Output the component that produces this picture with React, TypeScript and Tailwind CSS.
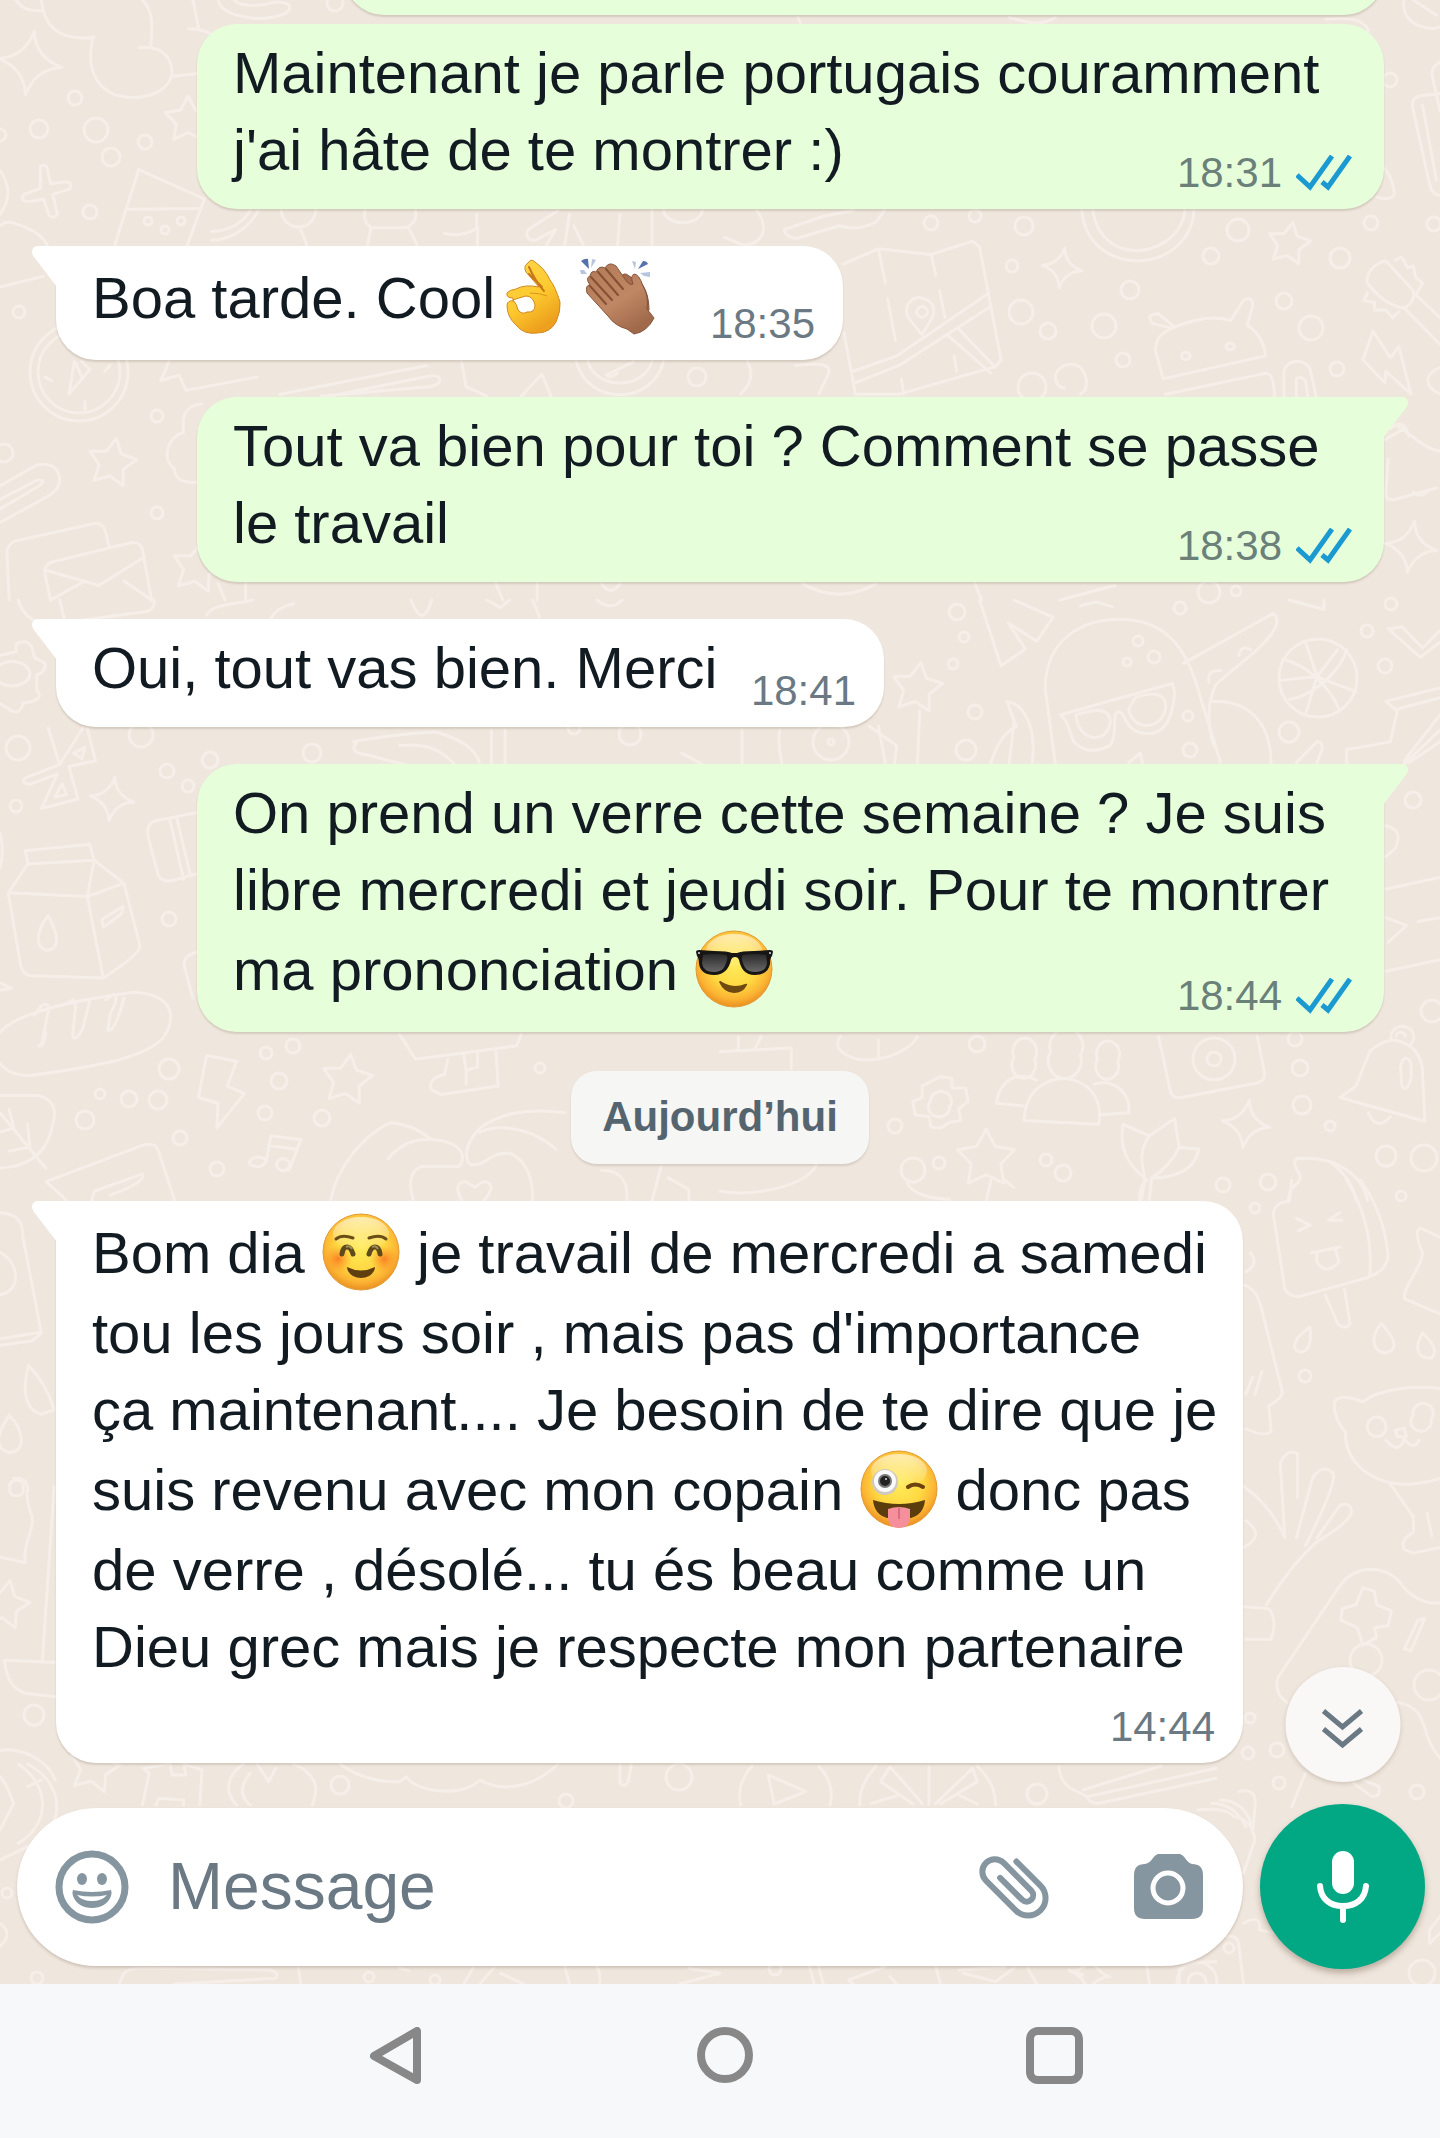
import { ReactNode } from 'react';
import clsx from 'clsx';

type Message = {
  id: string;
  mine: boolean;
  tail: boolean;
  time: string;
  lines: ReactNode[];
  layout: 'inline' | 'overlay' | 'stacked';
  width: string;
};

const RINGS: [number, number, number][] = [
  [75, 98, 7], [39, 129, 9], [96, 130, 12], [145, 142, 7], [111, 157, 9],
  [90, 212, 7], [0, 135, 6], [148, 221, 4], [181, 221, 4], [165, 230, 4],
  [19, 312, 6], [157, 416, 6], [4, 453, 9], [157, 513, 6], [697, 377, 9],
  [335, 3, 8], [931, 223, 7], [975, 216, 6], [1024, 226, 9], [1238, 230, 11],
  [1211, 256, 8], [1012, 266, 6], [1130, 290, 9], [1021, 312, 12],
  [1048, 331, 8], [1104, 326, 12], [1123, 360, 7], [1340, 258, 10],
  [1371, 223, 7], [1284, 301, 8], [1311, 328, 12], [1337, 369, 7],
  [1390, 80, 7], [1434, 224, 7], [1209, 592, 11], [1236, 591, 5],
  [1032, 387, 14], [18, 748, 12], [141, 735, 12], [167, 771, 7],
  [188, 786, 6], [210, 760, 8], [16, 806, 6], [312, 753, 9], [169, 919, 7],
  [266, 1053, 6], [293, 1046, 7], [169, 1069, 10], [279, 1081, 8],
  [100, 1094, 5], [129, 1099, 8], [158, 1100, 9], [85, 1120, 9],
  [265, 1113, 7], [322, 1118, 8], [180, 1138, 7], [217, 1169, 7],
  [540, 1068, 5], [630, 734, 11], [574, 728, 6], [957, 612, 8],
  [964, 637, 5], [953, 664, 5], [975, 712, 7], [966, 750, 10],
  [1180, 608, 6], [1138, 641, 5], [1154, 657, 6], [1127, 662, 4],
  [1367, 631, 6], [1385, 666, 7], [1289, 732, 10], [1391, 604, 6],
  [1188, 716, 5], [1190, 750, 7], [977, 1044, 8], [1295, 1039, 7],
  [1300, 1068, 8], [1302, 1105, 9], [1330, 1126, 5], [895, 1126, 7],
  [913, 1170, 12], [939, 1163, 6], [1046, 1160, 6], [1063, 1173, 8],
  [1223, 1185, 7], [1268, 1182, 8], [1386, 1156, 10], [1424, 1158, 13],
  [1413, 800, 8], [1432, 1011, 11], [34, 1715, 10], [1255, 1208, 5],
  [1401, 1196, 5], [1305, 1376, 6], [1366, 1660, 16], [1429, 1685, 15],
  [1250, 1718, 5], [1248, 1753, 6], [1277, 1750, 7], [1037, 1794, 10],
  [1279, 1783, 6], [1417, 1792, 7], [775, 1969, 6], [1229, 1948, 5],
  [1422, 1973, 13], [1197, 1982, 20], [1197, 1982, 9], [340, 1785, 9],
  [566, 1801, 7], [679, 1777, 13], [369, 1977, 5], [435, 1980, 5],
  [37, 1978, 6], [7, 1893, 5],
  // compass and camera lens
  [79, 372, 49], [79, 372, 41], [1214, 1059, 21], [1214, 1059, 7],
  [831, 742, 18], [831, 742, 3], [1318, 678, 39],
];

const STARS: [number, number, number, number][] = [
  [112, 463, 25, 10], [188, 120, 24, 0], [197, 568, 26, 10],
  [1289, 244, 22, 10], [917, 688, 26, 8], [986, 1159, 30, 0],
  [347, 1080, 26, 8], [5, 1605, 25, 12], [94, 1768, 26, 12],
];

const SPARKLES: [number, number, number][] = [
  [30, 63, 32], [1062, 268, 20], [1411, 547, 26], [112, 799, 22],
  [1246, 1124, 24], [1090, 1974, 20],
];

function starPoints(r: number) {
  return Array.from({ length: 10 }, (_, i) => {
    const radius = i % 2 ? r * 0.52 : r;
    const angle = (i * Math.PI) / 5 - Math.PI / 2;
    return `${radius * Math.cos(angle)},${radius * Math.sin(angle)}`;
  }).join(' ');
}

function Doodles({ x, y, sy, paths }: { x: number; y: number; sy: number; paths: string[] }) {
  return (
    <g transform={`translate(${x} ${y}) scale(0.4592 ${sy})`}>
      {paths.map((d) => (
        <path key={d} d={d} vectorEffect="non-scaling-stroke" />
      ))}
    </g>
  );
}

const DOODLE_GROUPS = [
  {
    x: 0,
    y: 0,
    sy: 0.3827,
    paths: [
      // cloud, dropped shapes along the top edge
      'M90 0C95 60 120 108 205 98M35 0C45 20 65 30 90 28M310 0C335 30 332 70 328 125M203 95C185 180 210 250 285 255C350 255 378 215 374 180C370 140 345 120 303 125M374 200L430 192M410 75Q440 75 458 88M420 0L432 70M475 0C480 40 560 60 610 40C640 30 640 5 600 5C560 20 520 15 510 0',
      // plus
      'M88 435Q98 425 103 440L110 480L145 475Q160 480 150 495L115 508L125 560Q115 575 106 560L95 520L62 527Q42 525 52 508L88 492Z',
      // pizza slice
      'M302 443L250 640M302 443L445 520L408 640M275 547L440 545M0 445C20 480 25 520 0 560M0 590Q15 575 35 585C75 600 100 620 110 660',
      'M0 750L95 722M562 550C545 590 510 625 460 628M545 550C530 580 500 605 460 605',
      // mushroom row
      'M612 550C615 600 680 615 688 550M655 600L668 640M795 550Q790 580 808 595H885Q910 580 905 550M808 595L800 640M890 595L908 640M1038 560V600M968 610Q1010 620 1040 595V640M1215 550L1150 600Q1140 625 1165 628L1210 600L1190 640M1240 560L1230 640M1250 590L1270 640M1420 550V640M1350 560L1345 640M1445 550C1450 590 1520 595 1530 550',
      // compass needle
      'M162 945L150 1030L196 965L178 945M165 950L180 990M98 985L112 995M240 955L228 970M185 1070V1050',
      'M368 945L350 995L390 980L405 1020L560 985M610 1030L930 955M700 1035L940 1010Q965 1000 955 985Q945 978 925 985L720 1035M1005 945L1015 1010L1060 1035M1135 1035L1180 978L1200 1035M1255 945C1280 1060 1420 1060 1445 945M1280 945C1300 1020 1400 1020 1420 945M1320 980L1380 945M1325 985Q1335 985 1345 975',
      'M440 1055C400 1060 395 1090 400 1130C365 1140 350 1200 380 1225C380 1255 400 1262 430 1260',
      // paper clip
      'M0 1270L80 1215Q125 1205 130 1250Q130 1280 100 1300L0 1365M0 1330L85 1270Q105 1250 80 1255L0 1305',
      // envelopes
      'M20 1568L15 1440Q20 1415 40 1412L205 1368Q225 1365 230 1390L238 1430M110 1568L98 1500Q95 1475 115 1468L285 1418Q305 1415 310 1435L330 1568M100 1490L215 1530L315 1455M110 1568L185 1518M270 1518L330 1568',
      'M475 1525L490 1568M535 1525V1568M1080 1525L1095 1568M1170 1525V1568M1310 1525Q1330 1560 1350 1525',
    ],
  },
  {
    x: 720,
    y: 0,
    sy: 0.3827,
    paths: [
      'M1490 0C1480 60 1540 85 1568 70M1510 0L1560 40M1568 162Q1545 175 1552 205L1568 290M1568 245L1525 250Q1505 255 1508 280L1545 480Q1550 510 1568 510M1530 275L1560 470M1448 440Q1470 480 1468 510Q1460 525 1430 515',
      'M80 550C110 600 90 640 50 640L10 620M140 600L225 565L290 550M140 605Q150 625 170 622L260 590Q300 605 340 580L358 550M170 45L175 62M630 45Q700 75 730 45M1320 50Q1400 40 1412 80',
      // portrait ring
      'M788 550C795 640 850 680 910 682C980 680 1030 620 1032 550M812 550C820 620 860 655 910 655C970 650 1010 600 1012 550',
      // folded map
      'M268 690L345 650L460 665L550 630L565 645L612 940L600 958L390 1030L295 1030L270 870M345 650L360 740M365 780L382 890M460 665L470 720M478 760L490 830M395 990L400 1030M290 970L385 930L580 770M295 1000L390 955L590 800M495 875L590 975M520 860L600 960M510 930L515 970',
      'M440 875L410 830C395 790 430 770 440 780C465 785 470 810 462 830ZM432 805A8 9 0 1 0 448 825A8 9 0 1 0 432 805',
      // robot head
      'M965 990L948 915C950 870 975 865 985 858L942 845Q925 820 955 820L990 855C1020 840 1070 820 1112 838L1140 785Q1160 770 1160 800L1148 850C1175 870 1185 900 1188 930ZM1005 930A9 9 0 1 0 1024 930A9 9 0 1 0 1005 930M1102 905A9 9 0 1 0 1120 905A9 9 0 1 0 1102 905M970 1030L1190 975Q1205 975 1208 1035M1228 1035V970Q1235 940 1265 945Q1285 950 1288 980L1298 1035M1255 1035V990Q1265 980 1275 995L1280 1035',
      'M730 980C740 950 770 945 785 960C805 990 800 1020 785 1030M750 1015Q730 1010 730 980',
      // guitar head
      'M1410 740C1405 710 1430 685 1450 682L1510 760Q1515 790 1490 805Q1450 800 1410 740M1470 680L1485 672L1498 700L1510 695L1515 725L1530 740L1518 765M1410 765L1402 785L1425 790L1425 810L1450 810L1465 830L1478 815M1490 805L1568 900M1515 770L1568 830',
      'M1422 865L1400 940L1448 1000L1450 970L1505 1030L1478 905L1460 935Z',
      'M1568 960C1530 980 1535 1010 1568 1030M1470 1110C1500 1130 1530 1170 1568 1180M1455 1200L1450 1290Q1450 1310 1470 1305L1560 1275M1510 1285Q1525 1305 1545 1280M1445 1150L1490 1120M1500 1140Q1490 1090 1460 1120',
      'M180 1525Q260 1580 340 1525M555 1525L570 1568M860 1530L740 1568M60 945Q80 990 45 1030M165 955Q250 940 235 980L215 1030',
    ],
  },
  {
    x: 0,
    y: 600,
    sy: 0.3827,
    paths: [
      'M40 0Q50 50 100 65L320 30Q340 20 335 0M130 0L140 50M450 40C460 10 520 10 550 0M590 50Q600 20 640 10M895 0Q920 80 940 0M1060 0L1090 20L1110 0M1160 0L1175 45M1300 0Q1330 30 1355 0',
      // cog
      'M0 145L35 135V115Q60 100 70 125L75 150L98 165Q100 190 80 195V235Q95 255 70 265L50 270Q45 300 25 290L0 270M0 170A38 32 0 1 1 0 215',
      // tied bow
      'M105 335L130 430L55 465Q45 480 65 482L125 455L90 545L170 520L150 435L208 420L190 335M130 430L180 335M160 400L185 385L178 415ZM120 515L135 480L145 508Z',
      'M770 370Q860 350 950 345C1020 370 1040 400 1045 430M775 375Q760 400 800 405L880 430M870 380Q950 370 990 430M1070 340V430M1100 340V430M1485 400L1530 430',
      // milk carton
      'M60 685L55 655L195 638L205 680L60 690L18 765L190 775L205 680L270 740L305 905Q305 925 225 988L190 775L270 740M18 765L45 955Q50 985 80 982L225 988M222 835L268 800L265 820L225 855ZM105 825C80 860 75 905 100 915C130 915 130 880 105 825',
      'M430 555L335 578Q315 590 325 630L345 720Q355 740 380 732L430 715M370 575L400 730M385 570L415 720M430 920Q395 930 402 960L420 1040M0 610Q10 650 0 700M0 1000L25 1015L0 1020',
      // bread
      'M0 1130C40 1070 200 1040 290 1025C370 1030 390 1080 355 1145C310 1200 200 1220 70 1242Q20 1245 0 1210M75 1085L90 1060Q110 1050 105 1075L90 1165M85 1165Q95 1170 100 1130M135 1060L160 1045L165 1060L158 1140Q165 1155 180 1120L195 1050M230 1045L248 1030Q260 1040 240 1080L235 1125Q250 1130 270 1040',
      // bolt
      'M450 1190L515 1205L495 1270L532 1290L472 1380L475 1315L432 1300Z',
      // leaf
      'M0 1295H85Q130 1310 115 1370C105 1440 70 1480 0 1485M0 1340L100 1485M20 1330L30 1380L0 1390M60 1370L65 1430L20 1440',
      // music note
      'M580 1465L590 1400L655 1410L630 1490M585 1425L645 1435M580 1465A18 14 0 1 0 545 1475Q570 1490 580 1465M630 1480A14 16 0 1 0 605 1485Q620 1500 630 1480',
      'M100 1520L310 1425Q340 1415 345 1440L380 1568M100 1520L145 1568M200 1568L205 1545L310 1500Q320 1520 240 1555',
      // clasped hands
      'M720 1568C735 1480 790 1400 850 1365Q900 1370 940 1410M845 1460Q880 1410 930 1410C1000 1410 1020 1450 1000 1480H920C890 1490 890 1530 900 1568M1020 1470Q1005 1430 1045 1380Q1110 1320 1230 1340M1045 1390C1110 1360 1180 1400 1210 1435M1025 1475C1060 1480 1060 1445 1110 1445Q1160 1470 1160 1568M1005 1568Q985 1520 1015 1520L1035 1535Q1060 1505 1070 1535Q1065 1555 1055 1568',
      'M870 1135L905 1200L1125 1165L1135 1135M975 1200L968 1240Q930 1250 940 1280L960 1292L1085 1270L1080 1180M1010 1190L1015 1230L1040 1220V1185M1015 1235V1265M1310 1490Q1370 1490 1365 1568M1440 1480L1420 1568M1455 1510L1500 1540V1568',
    ],
  },
  {
    x: 720,
    y: 600,
    sy: 0.3827,
    paths: [
      'M565 0L612 172L665 128L628 60L690 108L725 45L640 0M785 15L820 5L855 18M1240 0L1315 25V0',
      // face with glasses
      'M730 425L708 230C710 100 790 50 870 50C980 50 1020 140 1045 250L1090 425M742 300L985 218L990 240C985 340 950 360 910 345C880 330 885 300 870 292C850 290 868 350 850 380Q800 410 770 370L755 320ZM775 300C780 370 840 380 850 320C850 280 820 285 775 300M890 285C900 345 960 340 970 285C975 240 940 240 905 255Z',
      'M1010 165L1205 35C1230 60 1190 110 1150 150L1080 220C1060 270 1060 320 1075 380M1070 265C1150 260 1200 320 1200 425M1065 215Q1060 180 1090 185M1130 145Q1135 115 1155 130',
      // ball seams
      'M1225 155C1280 170 1330 230 1350 290M1240 260C1290 250 1350 190 1365 130M1275 110L1300 200L1275 300M1345 130L1300 200L1385 240M1220 210L1300 200',
      'M1455 75L1525 150L1568 110M1460 75L1485 70L1530 125L1568 80M1568 230L1450 265L1475 290L1460 370Q1400 385 1365 390V425M1475 285L1568 255M1500 425L1568 370M1490 420L1568 300M1255 425L1300 370Q1315 370 1310 395L1300 425M1480 440L1568 340',
      'M625 265C660 270 690 330 680 425M625 265L645 330Q610 350 590 425M640 320L630 425M48 340V425M130 340Q125 380 135 425M345 330L360 425M325 330L385 380L380 425M435 290L430 425M890 425L915 400L920 425',
      'M1450 590Q1490 600 1470 650L1450 670M1450 755L1568 725M1520 840L1568 830M1450 830L1495 850L1455 895M1450 970L1568 940',
      // group of people
      'M640 1195A26 35 0 1 1 685 1200A26 35 0 1 1 640 1195M720 1180A36 46 0 1 1 785 1190A36 46 0 1 1 720 1180M822 1200A25 34 0 1 1 866 1205A25 34 0 1 1 822 1200M662 1360C665 1280 710 1250 750 1250C800 1255 835 1300 825 1370ZM690 1255C650 1230 610 1250 602 1315L660 1322M815 1265C860 1250 895 1290 890 1340L830 1345',
      'M955 1140L980 1280Q985 1305 1005 1300L1170 1262Q1190 1255 1185 1230L1170 1140',
      // bell
      'M1350 1300L1385 1270L1415 1180Q1440 1150 1470 1150C1510 1160 1530 1190 1530 1240L1535 1362ZM1462 1150A25 28 0 1 1 1505 1160M1473 1140A9 10 0 1 1 1492 1140M1412 1340Q1430 1390 1460 1350M1485 1270L1482 1220Q1490 1180 1505 1210V1250Q1495 1290 1485 1270',
      // small cog
      'M465 1255L480 1245L505 1250L505 1275L535 1275L540 1310L520 1330L525 1360L500 1365L480 1380L460 1378L455 1350L425 1345L420 1310L440 1300L440 1270ZM458 1310A23 26 0 1 1 500 1325A23 26 0 1 1 458 1310',
      // tulip
      'M918 1568L925 1510C880 1470 870 1420 878 1370L935 1400L990 1355L1000 1430L1042 1435C1035 1490 990 1510 940 1510L935 1568M935 1400C910 1440 920 1480 925 1510M1000 1430Q980 1480 940 1510',
      'M1238 1568C1240 1520 1270 1530 1262 1500Q1245 1470 1255 1460C1350 1450 1400 1510 1410 1568M1330 1470Q1375 1510 1385 1568M0 1180L80 1175L155 1170V1225M75 1175L90 1140M40 1140V1170M262 1140Q240 1180 300 1200C360 1210 420 1170 430 1140M345 1200V1150M0 1545C80 1560 190 1530 210 1475',
    ],
  },
  {
    x: 0,
    y: 1180,
    sy: 0.3827,
    paths: [
      'M0 85C40 90 50 110 50 150L90 400L70 420L0 432M0 300C50 290 40 210 0 190M0 415L88 398M62 485C50 540 50 600 90 612L118 600Q100 530 62 485M20 615C0 650 -20 700 20 712C60 710 50 650 20 615',
      'M30 780Q60 775 60 810Q55 830 70 880C75 920 50 940 55 1000L0 985M22 805A15 15 0 1 1 50 805A15 15 0 1 1 22 805M118 800L92 1260M118 1260L10 1255Q15 1330 60 1342L122 1350M0 1490C60 1480 110 1530 120 1568',
    ],
  },
  {
    x: 720,
    y: 1180,
    sy: 0.3827,
    paths: [
      // ice lolly
      'M1245 0L1240 55Q1205 60 1205 90L1230 285Q1240 305 1260 305L1410 255Q1450 240 1455 200C1450 130 1430 60 1395 0M1365 0C1410 90 1420 170 1415 250M1318 300L1345 375Q1360 395 1372 375L1360 285M1255 100L1285 118L1260 132M1350 85L1325 105L1355 105M1288 190L1350 175M1300 190V215Q1320 250 1348 215L1340 180',
      'M1285 385C1250 410 1240 445 1265 450Q1290 445 1285 385M1440 375C1415 410 1420 450 1450 452Q1490 440 1440 375M1530 400C1510 440 1520 468 1550 465Q1568 440 1530 400M1568 150L1525 125Q1510 135 1530 190C1525 240 1490 270 1490 310L1568 350',
      // puppy
      'M1568 545C1500 535 1430 550 1400 580Q1350 555 1338 580Q1335 620 1362 660C1360 720 1400 790 1490 795C1530 795 1550 785 1568 780M1410 640A20 25 0 1 1 1450 650A20 25 0 1 1 1410 640M1510 615A22 25 0 1 1 1548 625A22 25 0 1 1 1510 615M1470 655L1490 648L1495 670L1475 670ZM1450 680Q1480 720 1490 675Q1510 710 1522 680M1460 795L1510 880V920Q1480 940 1490 965L1510 975L1568 960M1540 870L1550 930',
      'M1142 275C1170 285 1175 320 1180 340L1225 555Q1220 575 1195 590L1200 655Q1190 675 1145 650M1145 560L1160 515M1165 560L1180 500M1155 190Q1175 220 1145 240',
      // celery
      'M1230 935L1220 740Q1235 700 1258 715V830M1255 935L1290 780Q1310 740 1335 765Q1345 790 1275 955M1300 935L1350 850Q1375 840 1375 870Q1365 900 1300 945Q1240 1010 1190 1110M1140 800Q1200 850 1230 935M1145 890Q1190 930 1140 960M1142 1115L1195 1120Q1215 1150 1200 1200H1145',
      // gamepad
      'M1568 1105C1540 1110 1500 1090 1480 1050C1440 1000 1380 1010 1350 1060L1215 1300Q1205 1340 1235 1365M1385 1110L1400 1065L1425 1075L1430 1110L1462 1125L1455 1165L1425 1170L1430 1195L1400 1215L1388 1170L1352 1150L1355 1120ZM1520 1150L1535 1145L1505 1230L1490 1225ZM1475 1365C1550 1380 1520 1450 1568 1510',
      'M410 0C400 20 440 50 500 50M590 0L580 55M620 0L640 20M915 55Q910 20 930 0',
    ],
  },
  {
    x: 0,
    y: 1760,
    sy: 0.3333,
    paths: [
      'M0 50C15 70 20 100 30 130L0 210M60 12C140 70 150 200 60 260L0 300M40 12C110 80 110 190 40 250M60 80L90 60',
      'M310 135L325 40L312 25L370 12L375 45H405L400 12L440 30L435 135M340 135L345 115L400 120V135M530 12C490 50 490 100 515 135M560 12L585 65L600 25M640 12C700 50 690 100 680 135M545 40C525 70 520 110 545 135',
      'M740 12Q800 70 870 65L885 50C900 90 1000 120 1045 60C1110 110 1180 60 1215 12M1350 12V70Q1360 85 1368 65L1375 12M0 490Q30 520 0 560M260 672L270 640Q280 625 310 625L590 630Q610 640 600 655L380 672M650 625L655 672M870 625L890 632M1030 625L1010 672M1075 625L1045 672M1090 640L1140 672M1230 620L1240 672M1300 620Q1310 650 1305 672M1500 625L1568 640L1480 672',
    ],
  },
  {
    x: 720,
    y: 1640,
    sy: 0.3333,
    paths: [
      'M70 378Q35 430 45 495M215 378Q250 430 240 495M105 405L187 455L118 492ZM340 378Q300 440 305 495M560 378Q600 430 600 495M440 490L370 380L350 425L420 492M470 490L550 385L560 425L480 492M455 380V492M330 490L390 465M520 465L560 492M738 378Q740 430 770 450L800 470L1080 385M800 470Q805 490 825 490L1080 415M960 378L790 450M1130 378',
      // croissant
      'M1040 510Q1100 500 1120 530Q1160 540 1165 600L1140 700M1070 490Q1120 490 1145 560M1090 480Q1140 480 1160 560M1130 455Q1170 440 1165 500L1160 580M1275 400L1245 500M1380 430L1420 470Q1440 470 1435 440L1400 420M1140 850Q1180 820 1175 870L1210 880M1568 830L1545 870V910L1568 880M1095 890Q1130 880 1130 920L1140 1030M1000 1030V990Q1010 965 1080 965',
      'M195 980L205 1032M215 980L225 1032M360 980L280 1020L290 1032M370 1010L385 1032M470 980L480 1032M520 990L620 982M530 1000L600 1025L640 985M670 985L690 1032M930 980L935 1032M760 990L790 1005',
    ],
  },
];

function Wallpaper() {
  return (
    <svg
      aria-hidden="true"
      viewBox="0 0 1440 1984"
      preserveAspectRatio="xMidYMin slice"
      className="absolute inset-0 size-full"
      fill="none"
      stroke="#f6efe9"
      strokeWidth="3"
      strokeLinecap="round"
      strokeLinejoin="round"
    >
      {DOODLE_GROUPS.map((group) => (
        <Doodles key={`${group.x}-${group.y}`} {...group} />
      ))}
      {RINGS.map(([x, y, r]) => (
        <circle key={`${x}-${y}-${r}`} cx={x} cy={y} r={r} />
      ))}
      {STARS.map(([x, y, r, turn]) => (
        <polygon
          key={`${x}-${y}`}
          points={starPoints(r)}
          transform={`translate(${x} ${y}) rotate(${turn})`}
        />
      ))}
      {SPARKLES.map(([x, y, r]) => (
        <path
          key={`${x}-${y}`}
          d="M0 -1Q.12 -.2 1 0Q.2 .15 0 1Q-.15 .2 -1 0Q-.2 -.15 0 -1Z"
          vectorEffect="non-scaling-stroke"
          transform={`translate(${x} ${y}) rotate(8) scale(${r})`}
        />
      ))}
    </svg>
  );
}

function Emoji({ label, children }: { label: string; children: ReactNode }) {
  return (
    <svg
      role="img"
      aria-label={label}
      viewBox="0 0 80 83"
      className="inline-block h-[83px] w-20 align-[-21px]"
    >
      {children}
    </svg>
  );
}

function Face() {
  return (
    <>
      <defs>
        <radialGradient id="face" cx="0.5" cy="0.42" r="0.58">
          <stop offset="0" stopColor="#ffec5e" />
          <stop offset="0.55" stopColor="#fed841" />
          <stop offset="0.82" stopColor="#fbb433" />
          <stop offset="1" stopColor="#ea8f22" />
        </radialGradient>
        <linearGradient id="shine" x1="0" y1="0" x2="0" y2="1">
          <stop offset="0" stopColor="#fff" stopOpacity="0.6" />
          <stop offset="1" stopColor="#fff" stopOpacity="0" />
        </linearGradient>
      </defs>
      <circle cx="40" cy="41" r="38" fill="url(#face)" stroke="#e29a35" strokeWidth="1" />
      <ellipse cx="40" cy="23" rx="28" ry="17" fill="url(#shine)" />
    </>
  );
}

function SmilingEmoji() {
  return (
    <Emoji label="☺️">
      <Face />
      <defs>
        <radialGradient id="blush">
          <stop offset="0" stopColor="#f9661c" stopOpacity="0.75" />
          <stop offset="1" stopColor="#fb8a22" stopOpacity="0" />
        </radialGradient>
      </defs>
      <circle cx="17" cy="48" r="14" fill="url(#blush)" />
      <circle cx="63" cy="48" r="14" fill="url(#blush)" />
      <g fill="none" strokeLinecap="round">
        <path d="M15 28Q21 23 32 27M48 27Q59 23 65 28" stroke="#6b4d16" strokeWidth="3" />
        <path d="M21 43Q22 36 26 36T32 43M48 43Q50 36 54 36T59 43" stroke="#5e4a1a" strokeWidth="5" />
      </g>
      <path d="M25 36Q29 34 31 38M51 36Q55 34 57 38" fill="none" stroke="#a08c55" strokeWidth="2" />
      <path d="M26 56Q40 63 54 56Q54 58 53 60Q49 67 40 67T27 60Q26 58 26 56Z" fill="#5f3f10" />
    </Emoji>
  );
}

function SunglassesEmoji() {
  return (
    <Emoji label="😎">
      <Face />
      <defs>
        <linearGradient id="lens" x1="0" y1="0" x2="0" y2="1">
          <stop offset="0" stopColor="#2a2a2a" />
          <stop offset="1" stopColor="#686868" />
        </linearGradient>
      </defs>
      <path
        d="M2 24Q2 22 5 22L20 23Q34 23 38 25H43Q47 23 60 23L76 22Q79 22 79 24L78 28Q76 30 76 36Q74 47 61 47C50 47 47 40 45 32Q44 29 41 29T37 32C35 40 31 47 20 47Q7 47 5 36Q5 30 3 28Z"
        fill="#171615"
      />
      <path
        d="M9 27Q20 25 32 27Q34 28 33 32C31 39 29 44 20 44Q9 44 8 35ZM72 27Q61 25 49 27Q47 28 48 32C50 39 52 44 61 44Q72 44 73 35Z"
        fill="url(#lens)"
      />
      <circle cx="5" cy="25" r="1" fill="#ddd" />
      <circle cx="76" cy="25" r="1" fill="#ddd" />
      <path d="M25 54Q26 52 28 54Q40 61 51 56Q54 55 53 57Q49 65 40 65Q30 65 25 54Z" fill="#6f4a10" />
    </Emoji>
  );
}

function WinkEmoji() {
  return (
    <Emoji label="😜">
      <Face />
      <circle cx="26" cy="34" r="13" fill="#cfc9c0" />
      <circle cx="26" cy="33" r="11" fill="#fafafa" />
      <circle cx="26" cy="33" r="7" fill="#777" />
      <circle cx="26" cy="33" r="5" fill="#222" />
      <circle cx="27" cy="31" r="1" fill="#ddd" />
      <path d="M49 39Q56 34 64 39" fill="none" stroke="#6b4210" strokeWidth="4" strokeLinecap="round" />
      <path d="M14 52Q40 60 66 52Q65 66 52 70H28Q15 66 14 52Z" fill="#5b3c0c" />
      <path d="M29 61Q40 57 51 61V70Q50 80 40 80T29 70Z" fill="#f58f9b" />
      <path d="M40 60V71" stroke="#d96c80" strokeWidth="2" />
    </Emoji>
  );
}

function OkHandEmoji() {
  return (
    <Emoji label="👌">
      <defs>
        <linearGradient id="hand" x1="0" y1="0" x2="0.5" y2="1">
          <stop offset="0" stopColor="#ffd84a" />
          <stop offset="0.6" stopColor="#fdc92f" />
          <stop offset="1" stopColor="#eda01d" />
        </linearGradient>
      </defs>
      <path
        fillRule="evenodd"
        d="M33 7Q36 2 40 6Q50 13 55 24Q60 30 65 46Q66 55 61 66Q55 77 42 77Q29 79 21 69Q12 61 12 49Q13 44 18 45L18 42Q11 42 12 37Q14 34 21 33Q30 28 44 31L31 16Q28 10 33 7ZM24 42L18 44Q22 48 23 54Q27 59 32 56Q40 57 40 49Q38 40 31 40Z"
        fill="url(#hand)"
        stroke="#cf8a20"
        strokeWidth="1"
      />
      <path d="M34 11Q40 25 49 35M34 18L47 31" fill="none" stroke="#c9751a" strokeWidth="2" strokeLinecap="round" />
      <path d="M35 37Q45 37 52 40" fill="none" stroke="#dc9220" strokeWidth="1" />
    </Emoji>
  );
}

function ClapEmoji() {
  return (
    <Emoji label="👏🏽">
      <defs>
        <linearGradient id="palm" x1="0" y1="0" x2="0.6" y2="1">
          <stop offset="0" stopColor="#b47a58" />
          <stop offset="0.6" stopColor="#bf8763" />
          <stop offset="1" stopColor="#a0694a" />
        </linearGradient>
      </defs>
      <path d="M45 22Q49 15 54 20L67 28Q74 38 74 54L66 62L40 40Z" fill="#a56d4d" stroke="#7d4f38" strokeWidth="1" />
      <path
        d="M21 16Q24 9 30 12Q34 5 41 10L52 26Q56 30 58 28Q55 20 59 18Q64 18 68 30Q74 40 72 53L79 62Q72 76 59 78L52 73Q40 70 33 60L12 37Q10 29 15 29Q10 22 15 20Q16 14 21 16Z"
        fill="url(#palm)"
        stroke="#855438"
        strokeWidth="1"
      />
      <path d="M15 30L31 48M16 21L37 44M23 16L43 39M31 13L48 33" fill="none" stroke="#855033" strokeWidth="2" strokeLinecap="round" />
      <path d="M6 5Q10 2 13 3L14 13ZM63 13L68 5Q72 5 73 8Z" fill="#5572ad" />
      <path d="M17 3L21 4L16 12ZM5 14L9 14L12 18L6 18ZM57 5L61 6L60 13ZM65 17L75 16V21L69 20Z" fill="#b7c5df" />
    </Emoji>
  );
}

function DoubleCheckIcon() {
  return (
    <svg viewBox="0 0 56 36" className="h-9 w-14" fill="none" stroke="#1b9ad2" strokeWidth="5" role="img" aria-label="Lu">
      <path d="M1 20L14 32L36 1M26 27L32 32L54 1" />
    </svg>
  );
}

function Tail({ mine }: { mine: boolean }) {
  return (
    <svg
      aria-hidden="true"
      viewBox="0 0 26 42"
      className={clsx(
        'absolute top-0 h-[42px] w-[26px]',
        mine ? '-right-[25px] -scale-x-100 fill-[#e6ffda]' : '-left-[25px] fill-white',
      )}
    >
      <path d="M26 0H6Q1 1 1 6Q1 8 3 11L26 41Z" />
    </svg>
  );
}

function MessageTime({ message }: { message: Message }) {
  return (
    <div
      className={clsx(
        'flex items-center gap-[14px] text-[42px] leading-[42px]',
        message.mine ? 'text-[#6b8079]' : 'text-[#6a7983]',
        message.layout === 'overlay' && 'self-end justify-self-end [grid-area:1/1]',
        message.layout === 'stacked' && 'mt-[15px] self-end',
      )}
    >
      <time>{message.time}</time>
      {message.mine && <DoubleCheckIcon />}
    </div>
  );
}

function MessageBubble({ message }: { message: Message }) {
  const { mine, tail, layout, lines, width } = message;

  return (
    <li
      className={clsx(
        'relative max-w-[1187px] rounded-[40px] pt-[10px] pb-[15px] pl-9 shadow-[0_2px_2px_rgba(90,70,50,0.18)]',
        width,
        mine ? 'self-end bg-[#e6ffda] pr-8' : 'self-start bg-white pr-7',
        tail && (mine ? 'rounded-tr-none' : 'rounded-tl-none'),
        layout === 'inline' && 'flex items-end justify-between',
        layout === 'overlay' && 'grid',
        layout === 'stacked' && 'flex flex-col',
      )}
    >
      {tail && <Tail mine={mine} />}
      <p
        className={clsx(
          'whitespace-nowrap pb-[6px] text-[58px] leading-[77px] text-[#111b21]',
          layout === 'overlay' && '[grid-area:1/1]',
        )}
      >
        {lines.map((line, index) => (
          <span key={index} className="block">
            {line}
          </span>
        ))}
      </p>
      <MessageTime message={message} />
    </li>
  );
}

const YESTERDAY: Message[] = [
  {
    id: 'm1',
    mine: true,
    tail: false,
    time: '18:31',
    layout: 'overlay',
    width: 'w-full',
    lines: ['Maintenant je parle portugais couramment', "j'ai hâte de te montrer :)"],
  },
  {
    id: 'm2',
    mine: false,
    tail: true,
    time: '18:35',
    layout: 'inline',
    width: 'w-[787px]',
    lines: [
      <>
        Boa tarde. Cool
        <OkHandEmoji />
        <ClapEmoji />
      </>,
    ],
  },
  {
    id: 'm3',
    mine: true,
    tail: true,
    time: '18:38',
    layout: 'overlay',
    width: 'w-full',
    lines: ['Tout va bien pour toi ? Comment se passe', 'le travail'],
  },
  {
    id: 'm4',
    mine: false,
    tail: true,
    time: '18:41',
    layout: 'inline',
    width: 'w-[828px]',
    lines: ['Oui, tout vas bien. Merci'],
  },
  {
    id: 'm5',
    mine: true,
    tail: true,
    time: '18:44',
    layout: 'overlay',
    width: 'w-full',
    lines: [
      'On prend un verre cette semaine ? Je suis',
      'libre mercredi et jeudi soir. Pour te montrer',
      <>
        ma prononciation <SunglassesEmoji />
      </>,
    ],
  },
];

const TODAY: Message[] = [
  {
    id: 'm6',
    mine: false,
    tail: true,
    time: '14:44',
    layout: 'stacked',
    width: 'w-full',
    lines: [
      <>
        Bom dia <SmilingEmoji /> je travail de mercredi a samedi
      </>,
      "tou les jours soir , mais pas d'importance",
      'ça maintenant.... Je besoin de te dire que je',
      <>
        suis revenu avec mon copain <WinkEmoji /> donc pas
      </>,
      'de verre , désolé... tu és beau comme un',
      'Dieu grec mais je respecte mon partenaire',
    ],
  },
];

function Composer() {
  return (
    <form
      className="relative flex items-center gap-[17px] pt-[41px] pr-[15px] pb-[15px] pl-[17px]"
      onSubmit={(event) => event.preventDefault()}
    >
      <div className="flex h-[158px] min-w-0 flex-1 items-center rounded-full bg-white pr-10 pl-[38px] shadow-[0_2px_3px_rgba(90,70,50,0.22)]">
        <button type="button" aria-label="Emojis">
          <svg viewBox="0 0 74 74" className="size-[74px]">
            <circle cx="37" cy="37" r="33" fill="none" stroke="#8696a0" strokeWidth="7" />
            <ellipse cx="27" cy="29" rx="5" ry="6" fill="#8696a0" />
            <ellipse cx="47" cy="29" rx="5" ry="6" fill="#8696a0" />
            <path d="M18 40Q37 44 56 40Q57 42 56 46C53 54 46 58 37 58S21 54 18 46Q17 42 18 40Z" fill="#8696a0" />
            <path d="M22 45Q37 48 52 45Q47 51 37 51T22 45Z" fill="#fff" />
          </svg>
        </button>
        <input
          type="text"
          aria-label="Message"
          placeholder="Message"
          className="ml-[39px] h-20 min-w-0 flex-1 bg-transparent text-[66px] text-[#111b21] outline-none placeholder:text-[#6a7983]"
        />
        <button type="button" aria-label="Joindre un fichier">
          <svg viewBox="-37 -33 74 66" className="h-[66px] w-[74px]" fill="none" stroke="#8696a0" strokeWidth="6" strokeLinecap="round">
            <path d="M-17 -19H17A17 17 0 0 1 17 16H-25A12 12 0 0 1 -25 -9H14A6 6 0 0 1 14 4H-17" transform="rotate(45)" />
          </svg>
        </button>
        <button type="button" aria-label="Appareil photo" className="ml-[82px]">
          <svg viewBox="0 0 69 65" className="h-[65px] w-[69px]" fill="#8696a0">
            <path d="M24 0H46Q49 1 51 4Q54 9 58 10Q69 10 69 21V54Q69 65 58 65H11Q0 65 0 54V21Q0 10 11 10Q16 9 19 4Q21 1 24 0Z" />
            <circle cx="34" cy="34" r="15" fill="none" stroke="#fff" strokeWidth="5" />
          </svg>
        </button>
      </div>
      <div className="relative">
        <button
          type="button"
          aria-label="Aller en bas"
          className="absolute bottom-full left-1/2 mb-[22px] flex size-[115px] -translate-x-1/2 items-center justify-center rounded-full bg-[#f9f8f7] shadow-[0_2px_4px_rgba(90,70,50,0.2)]"
        >
          <svg viewBox="0 0 42 40" className="mt-2 h-10 w-[42px]" fill="none" stroke="#6a7983" strokeWidth="5">
            <path d="M2 2L21 18L40 2M2 20L21 36L40 20" />
          </svg>
        </button>
        <button
          type="button"
          aria-label="Message vocal"
          className="flex size-[165px] items-center justify-center rounded-full bg-[#02a884] shadow-[0_4px_6px_rgba(90,70,50,0.35)]"
        >
          <svg viewBox="0 0 52 72" className="h-[72px] w-[52px]" fill="none" stroke="#fff" strokeWidth="6" strokeLinecap="round">
            <rect x="15" y="0" width="22" height="43" rx="11" fill="#fff" stroke="none" />
            <path d="M3 35C4 48 13 55 26 55S48 48 49 35M26 55V69" />
          </svg>
        </button>
      </div>
    </form>
  );
}

function NavigationBar() {
  return (
    <nav className="relative flex h-[154px] justify-center gap-[272px] bg-[#f7f8fa] pt-[43px] pl-[10px] *:size-[57px]">
      <button type="button" aria-label="Retour">
        <svg viewBox="0 0 57 57" fill="none" stroke="#888" strokeWidth="8" strokeLinejoin="round">
          <path d="M49 4V53L6 29Z" />
        </svg>
      </button>
      <button type="button" aria-label="Accueil">
        <svg viewBox="0 0 57 57" fill="none" stroke="#888" strokeWidth="8">
          <circle cx="28" cy="28" r="24" />
        </svg>
      </button>
      <button type="button" aria-label="Applications récentes">
        <svg viewBox="0 0 57 57" fill="none" stroke="#888" strokeWidth="8">
          <rect x="4" y="4" width="49" height="49" rx="8" />
        </svg>
      </button>
    </nav>
  );
}

export default function App() {
  return (
    <div className="flex min-h-screen flex-col overflow-hidden font-['Liberation_Sans',Arial,sans-serif]">
      <main className="relative flex flex-1 flex-col justify-between bg-[#efe6dd]">
        <Wallpaper />
        <div className="relative flex flex-col px-14">
          {/* previous message, scrolled out of view */}
          <div className="-mt-[65px] mb-[9px] h-20 w-[1040px] self-end rounded-[40px] bg-[#e6ffda] shadow-[0_2px_2px_rgba(90,70,50,0.18)]" />
          <ol className="flex flex-col gap-[37px]">
            {YESTERDAY.map((message) => (
              <MessageBubble key={message.id} message={message} />
            ))}
          </ol>
          <h2 className="mt-[39px] mb-[37px] self-center rounded-[26px] bg-[#f6f6f5] px-[31px] pt-[15px] pb-[17px] text-[42px] leading-[61px] font-bold text-[#54656f] shadow-[0_2px_2px_rgba(90,70,50,0.15)]">
            Aujourd’hui
          </h2>
          <ol className="flex flex-col gap-[37px]">
            {TODAY.map((message) => (
              <MessageBubble key={message.id} message={message} />
            ))}
          </ol>
        </div>
        <Composer />
      </main>
      <NavigationBar />
    </div>
  );
}
